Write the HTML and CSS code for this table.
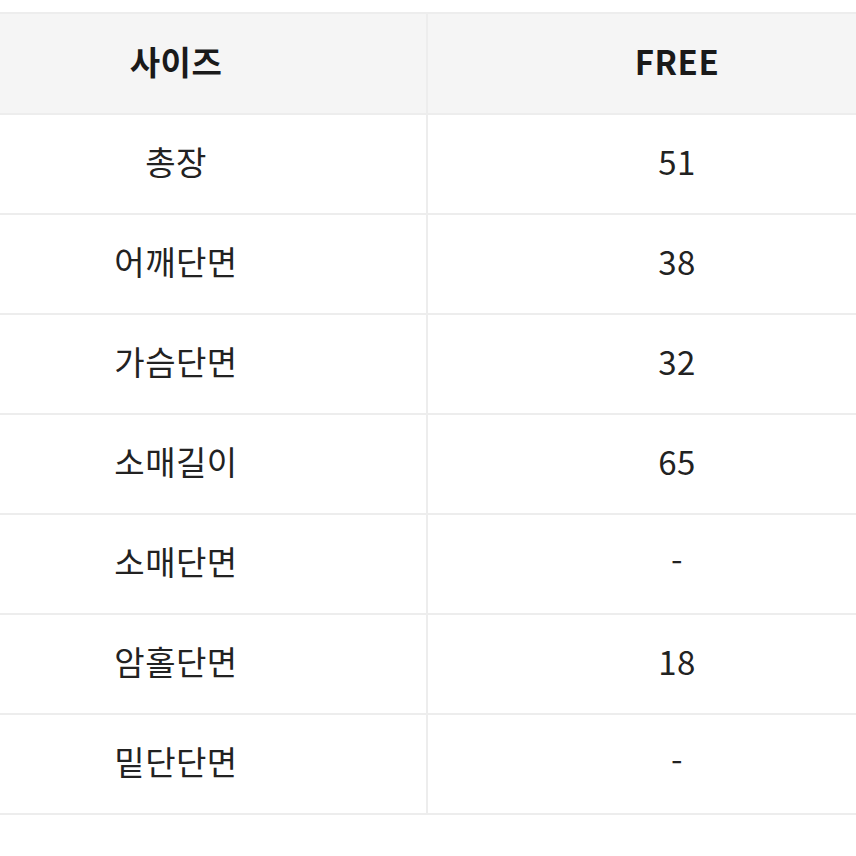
FILE: index.html
```html
<!DOCTYPE html>
<html lang="ko">
<head>
<meta charset="utf-8">
<link rel="stylesheet" href="styles.css">
</head>
<body>
<div class="size-table">
  <div class="row head"><div class="cell">사이즈</div><div class="cell">FREE</div></div>
  <div class="row"><div class="cell">총장</div><div class="cell">51</div></div>
  <div class="row"><div class="cell">어깨단면</div><div class="cell">38</div></div>
  <div class="row"><div class="cell">가슴단면</div><div class="cell">32</div></div>
  <div class="row"><div class="cell">소매길이</div><div class="cell">65</div></div>
  <div class="row"><div class="cell">소매단면</div><div class="cell">-</div></div>
  <div class="row"><div class="cell">암홀단면</div><div class="cell">18</div></div>
  <div class="row"><div class="cell">밑단단면</div><div class="cell">-</div></div>
</div>
</body>
</html>
```
FILE: styles.css
```css
html, body {
  margin: 0;
  padding: 0;
  background: #ffffff;
}
body {
  font-family: "Noto Sans CJK KR", "Noto Sans", sans-serif;
  color: #222222;
}
.size-table {
  margin-top: 12px;
  border-top: 2px solid #ededed;
  display: flex;
  flex-direction: column;
}
.row {
  display: grid;
  grid-template-columns: 426px 2px 1fr;
  height: 98px;
  border-bottom: 2px solid #ededed;
}
.row::before {
  content: "";
  grid-column: 2;
  grid-row: 1;
  background: #ededed;
}
.cell {
  display: flex;
  align-items: center;
  justify-content: center;
  font-size: 33px;
  grid-row: 1;
  letter-spacing: 0.5px;
  padding-bottom: 6px;
}
.cell:first-child {
  grid-column: 1;
  padding-right: 74px;
}
.cell:last-child {
  grid-column: 3;
  padding-left: 70px;
}
.head {
  background: #f5f5f5;
  height: 99px;
}
.head .cell {
  font-weight: 700;
  color: #1a1a1a;
}
```
